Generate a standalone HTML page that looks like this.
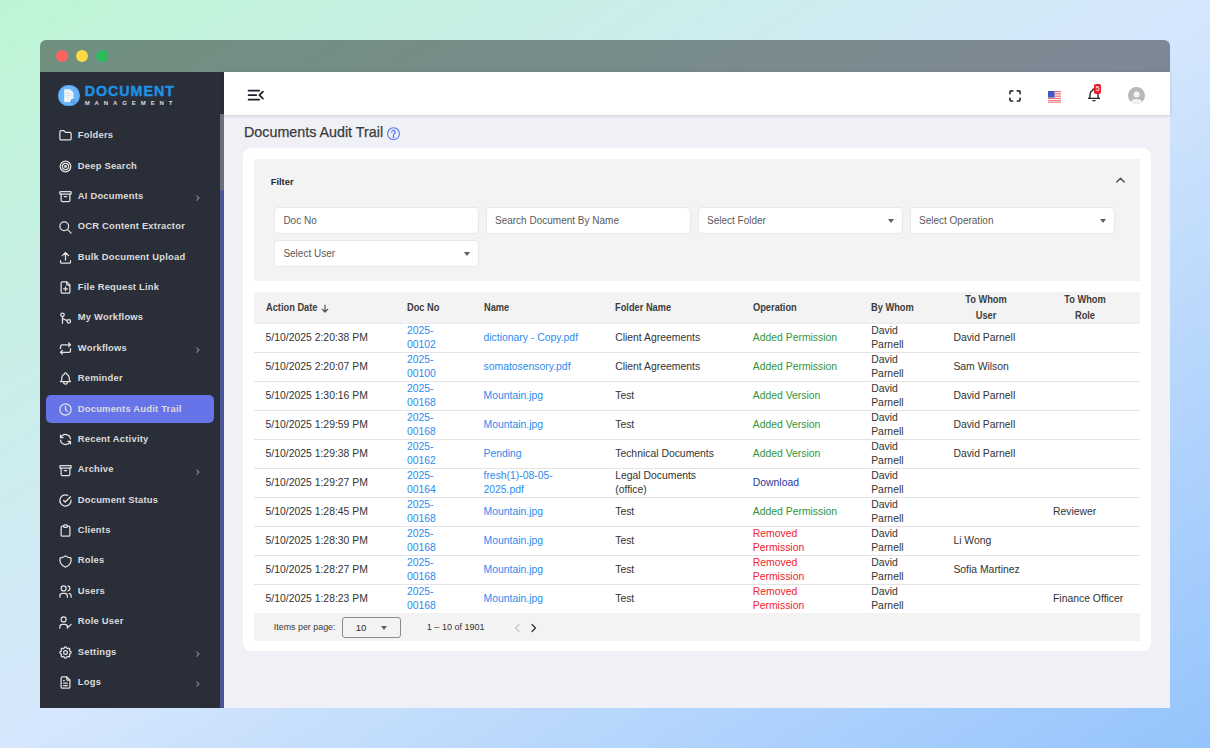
<!DOCTYPE html>
<html><head><meta charset="utf-8">
<style>
*{box-sizing:border-box;margin:0;padding:0}
html,body{width:1210px;height:748px;overflow:hidden}
body{font-family:"Liberation Sans",sans-serif;background:linear-gradient(to bottom right,#bdf6d4 0%,#d6e7fd 50%,#94c4fc 100%);position:relative}
.abs{position:absolute}
.win{position:absolute;left:40px;top:40px;width:1130px;height:668px;border-radius:6px 6px 0 0;overflow:hidden}
.tb{position:absolute;left:0;top:0;width:1130px;height:32px;background:rgba(0,0,0,.41)}
.dot{position:absolute;top:10px;width:12px;height:12px;border-radius:50%}
.side{position:absolute;left:40px;top:72px;width:184px;height:636px;background:#2a2e39;overflow:hidden}
.sbthumb{position:absolute;left:180px;top:42px;width:4px;height:76px;background:#6c6f77}
.sbtrack{position:absolute;left:180px;top:118px;width:4px;height:518px;background:#4b559c}
.act{position:absolute;left:6.2px;width:167.7px;height:28.2px;background:#6774e9;border-radius:5px}
.si{position:absolute;left:17.7px;height:20px;display:flex;align-items:center}
.si svg{display:block}
.st{position:absolute;left:37.8px;height:20px;line-height:19.6px;font-size:9.4px;letter-spacing:.22px;font-weight:bold;color:#dcdcdc;white-space:nowrap}
.chev{position:absolute;left:154.5px;width:3.5px;height:3.5px;border-right:1px solid #8a8d94;border-top:1px solid #8a8d94;transform:rotate(45deg)}
.logoc{position:absolute;left:18.3px;top:12.6px;width:21.6px;height:21.6px;border-radius:50%;background:#6bb6fb}
.logot{position:absolute;left:44.7px;top:9px;font-size:14.3px;font-weight:bold;color:#1e93e6;letter-spacing:.95px;white-space:nowrap;line-height:20px;-webkit-text-stroke:.35px #1e93e6}
.logos{position:absolute;left:44.7px;top:27px;font-size:6px;font-weight:bold;color:#dcdcdc;letter-spacing:4.9px;white-space:nowrap;line-height:8px}
.main{position:absolute;left:224px;top:72px;width:946px;height:636px;background:#f0f1f6}
.hdr{position:absolute;left:224px;top:72px;width:946px;height:43px;background:#fff;box-shadow:0 1px 3px rgba(0,0,0,.16)}
.ptitle{position:absolute;left:244px;top:121.5px;font-size:14.3px;line-height:20px;color:#3b3b3b;white-space:nowrap;-webkit-text-stroke:.25px #3b3b3b}
.card{position:absolute;left:243px;top:148px;width:908px;height:503.3px;background:#fff;border-radius:8px}
.fpanel{position:absolute;left:254px;top:159px;width:886px;height:122px;background:#f3f3f3}
.inp{position:absolute;width:205px;height:26.4px;background:#fff;border:1px solid #e8e8e8;border-radius:4px;font-size:10px;color:#5a5a5a;line-height:25.6px;padding-left:8px;white-space:nowrap}
.caret{position:absolute;width:0;height:0;border-left:3.5px solid transparent;border-right:3.5px solid transparent;border-top:4px solid #5f5f5f}
.thead{position:absolute;left:254px;top:292px;width:886px;height:32px;background:#f3f3f3;border-bottom:1px solid #ebebeb}
.th{position:absolute;font-size:10.3px;font-weight:bold;color:#3d3d3d;white-space:nowrap;line-height:16px;transform:scaleX(.9);transform-origin:0 50%}
.tbody{position:absolute;left:254px;top:292px;width:886px;height:350px}
.tr{position:absolute;left:0;width:886px;height:29px}
.tr.bb{border-bottom:1px solid #e4e4e4}
.c{position:absolute;top:0.2px;height:28px;display:flex;align-items:center;font-size:10.4px;line-height:14px;color:#333;white-space:nowrap}
.lk{color:#2b8cee}
.opg{color:#339439}
.opb{color:#27389b}
.opr{color:#f0222d}
.pag{position:absolute;left:254px;top:613px;width:886px;height:28.3px;background:#f3f3f3}
</style></head><body>
<div class="win">
  <div class="tb">
    <div class="dot" style="left:16px;background:#ff6560"></div>
    <div class="dot" style="left:36px;background:#fbdb45"></div>
    <div class="dot" style="left:56px;background:#2dbb5d"></div>
  </div>
</div>
<div class="side">
  <div class="logoc"></div>
  <svg class="abs" style="left:18.3px;top:12.6px" width="21.6" height="21.6" viewBox="0 0 22 22"><circle cx="11" cy="11" r="10.6" fill="none" stroke="#3d9ff2" stroke-width=".8"/><path d="M6.3 4.4h6.2l3.2 3.2v9.6H6.3z" fill="#eef3f8"/><path d="M8 8.7h5.2M8 10.7h5.2M8 12.7h3" stroke="#d0dae6" stroke-width=".7"/><circle cx="15.2" cy="16.5" r="2.3" fill="#2f7fd8"/><circle cx="15.2" cy="16.5" r="1.1" fill="none" stroke="#cfe3f7" stroke-width=".6"/></svg>
  <div class="logot">DOCUMENT</div>
  <div class="logos">MANAGEMENT</div>
  <div class="sbthumb"></div>
  <div class="sbtrack"></div>
<div class="si" style="top:53.95px"><svg width="15" height="15" viewBox="0 0 24 24" fill="none" stroke="#e2e2e2" stroke-width="2" stroke-linecap="round" stroke-linejoin="round"><path d="M5 4h4l3 3h7a2 2 0 0 1 2 2v8a2 2 0 0 1-2 2H5a2 2 0 0 1-2-2V6a2 2 0 0 1 2-2"/></svg></div>
<div class="st" style="top:53.15px">Folders</div>
<div class="si" style="top:84.33px"><svg width="15" height="15" viewBox="0 0 24 24" fill="none" stroke="#e2e2e2" stroke-width="2" stroke-linecap="round" stroke-linejoin="round"><circle cx="12" cy="12" r="8.5"/><circle cx="12" cy="12" r="5"/><circle cx="12" cy="12" r="1.3" fill="#e2e2e2"/></svg></div>
<div class="st" style="top:83.53px">Deep Search</div>
<div class="si" style="top:114.71px"><svg width="15" height="15" viewBox="0 0 24 24" fill="none" stroke="#e2e2e2" stroke-width="2" stroke-linecap="round" stroke-linejoin="round"><rect x="3" y="4" width="18" height="4" rx="1"/><path d="M5 8v10a2 2 0 0 0 2 2h10a2 2 0 0 0 2-2V8M10 12h4"/></svg></div>
<div class="st" style="top:113.91px">AI Documents</div>
<div class="chev" style="top:124.41px"></div>
<div class="si" style="top:145.09px"><svg width="15" height="15" viewBox="0 0 24 24" fill="none" stroke="#e2e2e2" stroke-width="2" stroke-linecap="round" stroke-linejoin="round"><circle cx="10" cy="10" r="7"/><path d="M21 21l-6-6"/></svg></div>
<div class="st" style="top:144.29px">OCR Content Extractor</div>
<div class="si" style="top:175.47px"><svg width="15" height="15" viewBox="0 0 24 24" fill="none" stroke="#e2e2e2" stroke-width="2" stroke-linecap="round" stroke-linejoin="round"><path d="M4 17v2a2 2 0 0 0 2 2h12a2 2 0 0 0 2-2v-2M7 9l5-5 5 5M12 4v12"/></svg></div>
<div class="st" style="top:174.67px">Bulk Document Upload</div>
<div class="si" style="top:205.85px"><svg width="15" height="15" viewBox="0 0 24 24" fill="none" stroke="#e2e2e2" stroke-width="2" stroke-linecap="round" stroke-linejoin="round"><path d="M14 3v4a1 1 0 0 0 1 1h4"/><path d="M17 21H7a2 2 0 0 1-2-2V5a2 2 0 0 1 2-2h7l5 5v11a2 2 0 0 1-2 2zM12 11v6M9 14h6"/></svg></div>
<div class="st" style="top:205.05px">File Request Link</div>
<div class="si" style="top:236.23px"><svg width="15" height="15" viewBox="0 0 24 24" fill="none" stroke="#e2e2e2" stroke-width="2" stroke-linecap="round" stroke-linejoin="round"><circle cx="7.2" cy="6.1" r="2.8"/><circle cx="17.3" cy="16.5" r="2.8"/><path d="M7.2 8.9v10.8M8 12.4l6.7 3"/></svg></div>
<div class="st" style="top:235.43px">My Workflows</div>
<div class="si" style="top:266.61px"><svg width="15" height="15" viewBox="0 0 24 24" fill="none" stroke="#e2e2e2" stroke-width="2" stroke-linecap="round" stroke-linejoin="round"><path d="M4 12V9a3 3 0 0 1 3-3h13m-3-3 3 3-3 3M20 12v3a3 3 0 0 1-3 3H4m3 3-3-3 3-3"/></svg></div>
<div class="st" style="top:265.81px">Workflows</div>
<div class="chev" style="top:276.31px"></div>
<div class="si" style="top:296.99px"><svg width="15" height="15" viewBox="0 0 24 24" fill="none" stroke="#e2e2e2" stroke-width="2" stroke-linecap="round" stroke-linejoin="round"><path d="M10 5a2 2 0 1 1 4 0 7 7 0 0 1 4 6v3a4 4 0 0 0 2 3H4a4 4 0 0 0 2-3v-3a7 7 0 0 1 4-6M9 17v1a3 3 0 0 0 6 0v-1"/></svg></div>
<div class="st" style="top:296.19px">Reminder</div>
<div class="act" style="top:322.70px"></div>
<div class="si" style="top:327.37px"><svg width="15" height="15" viewBox="0 0 24 24" fill="none" stroke="#e2e2e2" stroke-width="2" stroke-linecap="round" stroke-linejoin="round"><circle cx="12" cy="12" r="9"/><path d="M12 7v5l3 3"/></svg></div>
<div class="st" style="top:326.57px">Documents Audit Trail</div>
<div class="si" style="top:357.75px"><svg width="15" height="15" viewBox="0 0 24 24" fill="none" stroke="#e2e2e2" stroke-width="2" stroke-linecap="round" stroke-linejoin="round"><path d="M20 11A8.1 8.1 0 0 0 4.5 9M4 5v4h4M4 13a8.1 8.1 0 0 0 15.5 2m.5 4v-4h-4"/></svg></div>
<div class="st" style="top:356.95px">Recent Activity</div>
<div class="si" style="top:388.13px"><svg width="15" height="15" viewBox="0 0 24 24" fill="none" stroke="#e2e2e2" stroke-width="2" stroke-linecap="round" stroke-linejoin="round"><rect x="3" y="4" width="18" height="4" rx="1"/><path d="M5 8v10a2 2 0 0 0 2 2h10a2 2 0 0 0 2-2V8M10 12h4"/></svg></div>
<div class="st" style="top:387.33px">Archive</div>
<div class="chev" style="top:397.83px"></div>
<div class="si" style="top:418.51px"><svg width="15" height="15" viewBox="0 0 24 24" fill="none" stroke="#e2e2e2" stroke-width="2" stroke-linecap="round" stroke-linejoin="round"><path d="M20.9 11.5A9 9 0 1 1 15.5 3.7M9 12l2.5 2.5L20 6"/></svg></div>
<div class="st" style="top:417.71px">Document Status</div>
<div class="si" style="top:448.89px"><svg width="15" height="15" viewBox="0 0 24 24" fill="none" stroke="#e2e2e2" stroke-width="2" stroke-linecap="round" stroke-linejoin="round"><path d="M9 5H7a2 2 0 0 0-2 2v12a2 2 0 0 0 2 2h10a2 2 0 0 0 2-2V7a2 2 0 0 0-2-2h-2"/><rect x="9" y="3" width="6" height="4" rx="2"/></svg></div>
<div class="st" style="top:448.09px">Clients</div>
<div class="si" style="top:479.27px"><svg width="15" height="15" viewBox="0 0 24 24" fill="none" stroke="#e2e2e2" stroke-width="2" stroke-linecap="round" stroke-linejoin="round"><path d="M12 3a12 12 0 0 0 8.5 3A12 12 0 0 1 12 21 12 12 0 0 1 3.5 6 12 12 0 0 0 12 3"/></svg></div>
<div class="st" style="top:478.47px">Roles</div>
<div class="si" style="top:509.65px"><svg width="15" height="15" viewBox="0 0 24 24" fill="none" stroke="#e2e2e2" stroke-width="2" stroke-linecap="round" stroke-linejoin="round"><circle cx="9" cy="7" r="4"/><path d="M3 21v-2a4 4 0 0 1 4-4h4a4 4 0 0 1 4 4v2M16 3.13a4 4 0 0 1 0 7.75M21 21v-2a4 4 0 0 0-3-3.85"/></svg></div>
<div class="st" style="top:508.85px">Users</div>
<div class="si" style="top:540.03px"><svg width="15" height="15" viewBox="0 0 24 24" fill="none" stroke="#e2e2e2" stroke-width="2" stroke-linecap="round" stroke-linejoin="round"><circle cx="9" cy="7" r="4"/><path d="M3 21v-2a4 4 0 0 1 4-4h4a4 4 0 0 1 4 4v2M15 17l2 2 4-4"/></svg></div>
<div class="st" style="top:539.23px">Role User</div>
<div class="si" style="top:570.41px"><svg width="15" height="15" viewBox="0 0 24 24" fill="none" stroke="#e2e2e2" stroke-width="2" stroke-linecap="round" stroke-linejoin="round"><path d="M10.3 4.3c.4-1.8 3-1.8 3.4 0a1.7 1.7 0 0 0 2.6 1.1c1.5-.9 3.3.8 2.4 2.4a1.7 1.7 0 0 0 1 2.5c1.8.4 1.8 3 0 3.4a1.7 1.7 0 0 0-1 2.6c.9 1.5-.9 3.3-2.4 2.4a1.7 1.7 0 0 0-2.6 1c-.4 1.8-3 1.8-3.4 0a1.7 1.7 0 0 0-2.6-1c-1.5.9-3.3-.9-2.4-2.4a1.7 1.7 0 0 0-1-2.6c-1.8-.4-1.8-3 0-3.4a1.7 1.7 0 0 0 1-2.5c-.9-1.6.9-3.3 2.4-2.4 1 .6 2.3.1 2.6-1.1z"/><circle cx="12" cy="12" r="3"/></svg></div>
<div class="st" style="top:569.61px">Settings</div>
<div class="chev" style="top:580.11px"></div>
<div class="si" style="top:600.79px"><svg width="15" height="15" viewBox="0 0 24 24" fill="none" stroke="#e2e2e2" stroke-width="2" stroke-linecap="round" stroke-linejoin="round"><path d="M14 3v4a1 1 0 0 0 1 1h4"/><path d="M17 21H7a2 2 0 0 1-2-2V5a2 2 0 0 1 2-2h7l5 5v11a2 2 0 0 1-2 2zM9 9h1M9 13h6M9 17h6"/></svg></div>
<div class="st" style="top:599.99px">Logs</div>
<div class="chev" style="top:610.49px"></div>
</div>
<div class="main"></div>
<div class="hdr"></div>
<div class="ptitle">Documents Audit Trail</div>
<div class="card"></div>
<div class="fpanel"></div>
<svg class="abs" style="left:246px;top:87px" width="20" height="16" viewBox="0 0 20 16" fill="none" stroke="#1c1f2a" stroke-width="1.75" stroke-linecap="round" stroke-linejoin="round"><path d="M2.6 3.6h10.6M2.6 8.2h7.6M2.6 12.6h10.6M16.9 4.6 13.4 8.2l3.5 3.4"/></svg>
<svg class="abs" style="left:1007px;top:87.8px" width="16" height="16" viewBox="0 0 16 16" fill="none" stroke="#2a2d38" stroke-width="1.7" stroke-linecap="round" stroke-linejoin="round"><path d="M2.9 5.6V4.3a1.4 1.4 0 0 1 1.4-1.4h1.3M10.4 2.9h1.3a1.4 1.4 0 0 1 1.4 1.4v1.3M13.1 10.3v1.3a1.4 1.4 0 0 1-1.4 1.4h-1.3M5.6 13H4.3a1.4 1.4 0 0 1-1.4-1.4v-1.3"/></svg>
<svg class="abs" style="left:1048px;top:90.5px" width="13" height="12.5" viewBox="0 0 13 12.5">
<rect width="13" height="12.5" fill="#fff"/>
<rect y="0" width="13" height="1.2" fill="#f26a70"/><rect y="2.3" width="13" height="1.2" fill="#f26a70"/><rect y="4.6" width="13" height="1.2" fill="#f26a70"/><rect y="6.9" width="13" height="1.2" fill="#f26a70"/><rect y="9.2" width="13" height="1.2" fill="#f26a70"/><rect y="11.3" width="13" height="1.2" fill="#f26a70"/>
<rect width="6.5" height="6.6" fill="#4257c4"/></svg>
<svg class="abs" style="left:1086px;top:87.3px" width="16" height="16" viewBox="0 0 24 24" fill="none" stroke="#1f1f1f" stroke-width="2" stroke-linecap="round" stroke-linejoin="round"><path d="M10 5a2 2 0 1 1 4 0 7 7 0 0 1 4 6v3a4 4 0 0 0 2 3H4a4 4 0 0 0 2-3v-3a7 7 0 0 1 4-6M10.5 20.5h3"/></svg>
<div class="abs" style="left:1094px;top:84px;width:7.2px;height:10.2px;background:#f01c26;border-radius:2px"></div>
<div class="abs" style="left:1094px;top:84px;width:7.2px;height:10.2px;color:#fff;font-size:7px;line-height:10.2px;text-align:center">5</div>
<svg class="abs" style="left:1128.2px;top:86.6px" width="17" height="17" viewBox="0 0 17 17"><circle cx="8.5" cy="8.5" r="8.5" fill="#b6b8bc"/><circle cx="8.6" cy="7.6" r="3" fill="#f3f3f3"/><path d="M2.6 14.5Q4.3 12.1 8.5 12.1Q12.7 12.1 14.4 14.5A8.5 8.5 0 0 1 2.6 14.5z" fill="#f3f3f3"/></svg>
<svg class="abs" style="left:386.5px;top:127.2px" width="13" height="13.3" viewBox="0 0 13 13" fill="none" stroke="#587af5" stroke-width="1.15"><circle cx="6.5" cy="6.5" r="5.9"/><path d="M4.7 5a1.8 1.8 0 1 1 2.6 1.6c-.6.3-.8.7-.8 1.3v.4" stroke-linecap="round" stroke-width="1.3"/><circle cx="6.5" cy="9.9" r=".4" fill="#587af5"/></svg>
<svg class="abs" style="left:1115px;top:175px" width="11" height="9" viewBox="0 0 11 9" fill="none" stroke="#4a4a4a" stroke-width="1.3" stroke-linecap="round" stroke-linejoin="round"><path d="M1.8 7 5.5 3.2 9.2 7"/></svg>

<div class="abs" style="left:270.7px;top:174px;font-size:9.4px;font-weight:bold;color:#2b2b2b;line-height:16px">Filter</div>
<div class="inp" style="left:274.4px;top:207.3px">Doc No</div>
<div class="inp" style="left:486px;top:207.3px">Search Document By Name</div>
<div class="inp" style="left:698px;top:207.3px">Select Folder<div class="caret" style="left:189px;top:11.2px"></div></div>
<div class="inp" style="left:910px;top:207.3px">Select Operation<div class="caret" style="left:189px;top:11.2px"></div></div>
<div class="inp" style="left:274.4px;top:240.2px">Select User<div class="caret" style="left:189px;top:11.2px"></div></div>
<div class="thead"></div>
<div class="th" style="left:265.6px;top:300.2px">Action Date</div>
<div class="th" style="left:406.9px;top:300.2px">Doc No</div>
<div class="th" style="left:483.5px;top:300.2px">Name</div>
<div class="th" style="left:615.2px;top:300.2px">Folder Name</div>
<div class="th" style="left:752.8px;top:300.2px">Operation</div>
<div class="th" style="left:871.2px;top:300.2px">By Whom</div>
<div class="th" style="left:945.5px;width:80px;text-align:center;top:292px;line-height:16px;padding-top:0px;transform-origin:50% 50%">To Whom<br>User</div>
<div class="th" style="left:1044.5px;width:80px;text-align:center;top:292px;line-height:16px;padding-top:0px;transform-origin:50% 50%">To Whom<br>Role</div>
<div class="tbody">
<div class="tr bb" style="top:32.00px"><div class="c" style="left:11.6px">5/10/2025 2:20:38 PM</div><div class="c lk" style="left:152.9px">2025-<br>00102</div><div class="c lk" style="left:229.5px">dictionary - Copy.pdf</div><div class="c" style="left:361.2px">Client Agreements</div><div class="c opg" style="left:498.8px">Added Permission</div><div class="c" style="left:617.2px">David<br>Parnell</div><div class="c" style="left:699.4px">David Parnell</div></div>
<div class="tr bb" style="top:61.00px"><div class="c" style="left:11.6px">5/10/2025 2:20:07 PM</div><div class="c lk" style="left:152.9px">2025-<br>00100</div><div class="c lk" style="left:229.5px">somatosensory.pdf</div><div class="c" style="left:361.2px">Client Agreements</div><div class="c opg" style="left:498.8px">Added Permission</div><div class="c" style="left:617.2px">David<br>Parnell</div><div class="c" style="left:699.4px">Sam Wilson</div></div>
<div class="tr bb" style="top:90.00px"><div class="c" style="left:11.6px">5/10/2025 1:30:16 PM</div><div class="c lk" style="left:152.9px">2025-<br>00168</div><div class="c lk" style="left:229.5px">Mountain.jpg</div><div class="c" style="left:361.2px">Test</div><div class="c opg" style="left:498.8px">Added Version</div><div class="c" style="left:617.2px">David<br>Parnell</div><div class="c" style="left:699.4px">David Parnell</div></div>
<div class="tr bb" style="top:119.00px"><div class="c" style="left:11.6px">5/10/2025 1:29:59 PM</div><div class="c lk" style="left:152.9px">2025-<br>00168</div><div class="c lk" style="left:229.5px">Mountain.jpg</div><div class="c" style="left:361.2px">Test</div><div class="c opg" style="left:498.8px">Added Version</div><div class="c" style="left:617.2px">David<br>Parnell</div><div class="c" style="left:699.4px">David Parnell</div></div>
<div class="tr bb" style="top:148.00px"><div class="c" style="left:11.6px">5/10/2025 1:29:38 PM</div><div class="c lk" style="left:152.9px">2025-<br>00162</div><div class="c lk" style="left:229.5px">Pending</div><div class="c" style="left:361.2px">Technical Documents</div><div class="c opg" style="left:498.8px">Added Version</div><div class="c" style="left:617.2px">David<br>Parnell</div><div class="c" style="left:699.4px">David Parnell</div></div>
<div class="tr bb" style="top:177.00px"><div class="c" style="left:11.6px">5/10/2025 1:29:27 PM</div><div class="c lk" style="left:152.9px">2025-<br>00164</div><div class="c lk" style="left:229.5px">fresh(1)-08-05-<br>2025.pdf</div><div class="c" style="left:361.2px">Legal Documents<br>(office)</div><div class="c opb" style="left:498.8px">Download</div><div class="c" style="left:617.2px">David<br>Parnell</div></div>
<div class="tr bb" style="top:206.00px"><div class="c" style="left:11.6px">5/10/2025 1:28:45 PM</div><div class="c lk" style="left:152.9px">2025-<br>00168</div><div class="c lk" style="left:229.5px">Mountain.jpg</div><div class="c" style="left:361.2px">Test</div><div class="c opg" style="left:498.8px">Added Permission</div><div class="c" style="left:617.2px">David<br>Parnell</div><div class="c" style="left:799.0px">Reviewer</div></div>
<div class="tr bb" style="top:235.00px"><div class="c" style="left:11.6px">5/10/2025 1:28:30 PM</div><div class="c lk" style="left:152.9px">2025-<br>00168</div><div class="c lk" style="left:229.5px">Mountain.jpg</div><div class="c" style="left:361.2px">Test</div><div class="c opr" style="left:498.8px">Removed<br>Permission</div><div class="c" style="left:617.2px">David<br>Parnell</div><div class="c" style="left:699.4px">Li Wong</div></div>
<div class="tr bb" style="top:264.00px"><div class="c" style="left:11.6px">5/10/2025 1:28:27 PM</div><div class="c lk" style="left:152.9px">2025-<br>00168</div><div class="c lk" style="left:229.5px">Mountain.jpg</div><div class="c" style="left:361.2px">Test</div><div class="c opr" style="left:498.8px">Removed<br>Permission</div><div class="c" style="left:617.2px">David<br>Parnell</div><div class="c" style="left:699.4px">Sofia Martinez</div></div>
<div class="tr" style="top:293.00px"><div class="c" style="left:11.6px">5/10/2025 1:28:23 PM</div><div class="c lk" style="left:152.9px">2025-<br>00168</div><div class="c lk" style="left:229.5px">Mountain.jpg</div><div class="c" style="left:361.2px">Test</div><div class="c opr" style="left:498.8px">Removed<br>Permission</div><div class="c" style="left:617.2px">David<br>Parnell</div><div class="c" style="left:799.0px">Finance Officer</div></div>
</div>
<div class="pag"></div>
<div class="abs" style="left:273.8px;top:621px;font-size:8.9px;color:#3a3a3a;line-height:12px;white-space:nowrap">Items per page:</div>
<div class="abs" style="left:342.3px;top:616.9px;width:59.2px;height:20.8px;border:1px solid #8a8a8a;border-radius:3px"></div>
<div class="abs" style="left:355.7px;top:622px;font-size:9.6px;color:#2b2b2b;line-height:12px">10</div>
<div class="caret" style="left:381px;top:626px"></div>
<div class="abs" style="left:426.8px;top:621px;font-size:9.05px;color:#333;line-height:12px;white-space:nowrap">1 – 10 of 1901</div>
<svg class="abs" style="left:511.5px;top:621.5px" width="10" height="12" viewBox="0 0 10 12" fill="none" stroke="#c4c4c4" stroke-width="1.1" stroke-linecap="round" stroke-linejoin="round"><path d="M7 2.5 3.5 6 7 9.5"/></svg>
<svg class="abs" style="left:528.5px;top:621.5px" width="10" height="12" viewBox="0 0 10 12" fill="none" stroke="#333" stroke-width="1.25" stroke-linecap="round" stroke-linejoin="round"><path d="M3 2.5 6.5 6 3 9.5"/></svg>
<svg class="abs" style="left:320px;top:304px" width="10" height="9" viewBox="0 0 10 9" fill="none" stroke="#555" stroke-width="1.2" stroke-linecap="round" stroke-linejoin="round"><path d="M5 1v7M2.2 5.3 5 8l2.8-2.7"/></svg>
</body></html>
